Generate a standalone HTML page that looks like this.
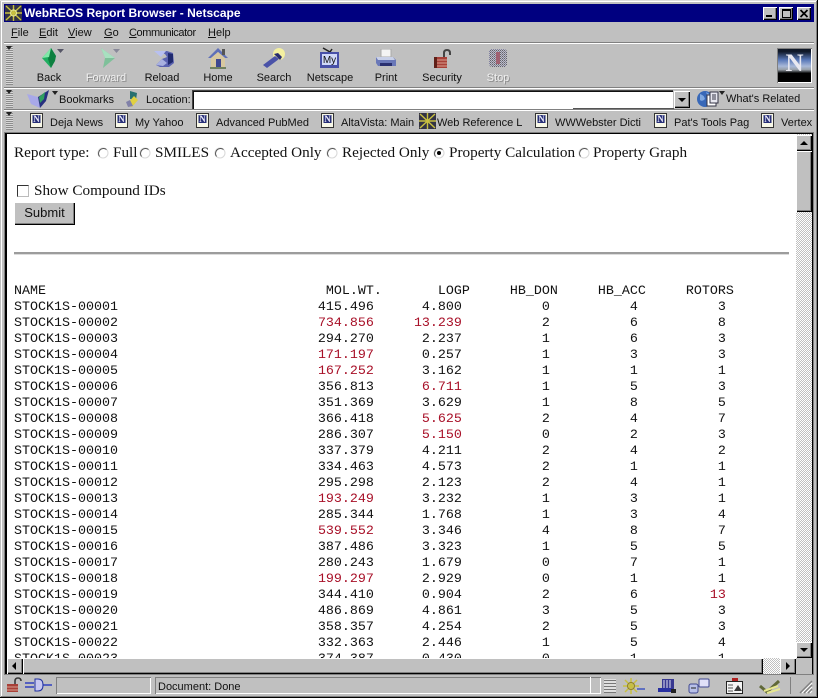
<!DOCTYPE html>
<html><head><meta charset="utf-8"><title>WebREOS Report Browser - Netscape</title>
<style>
html,body{margin:0;padding:0;background:#c0c0c0}
#w{position:relative;width:818px;height:698px;overflow:hidden;background:#c0c0c0;font:11px "Liberation Sans",sans-serif;color:#111}
#w>*,.a{position:absolute}
.t{white-space:nowrap;line-height:14px}
.c{text-align:center;width:56px}
.g{color:#f0f0f0;text-shadow:1px 1px 0 #8a8a8a}
.hl{background:#fff;height:1px}
.dk{background:#808080;height:1px}
.grip{width:7px;background:repeating-linear-gradient(0deg,#8c8c8c 0 1px,#d8d8d8 1px 2px);left:6px}
.btn{background:#c0c0c0;box-shadow:inset 1px 1px 0 #fff,inset -1px -1px 0 #000,inset -2px -2px 0 #808080}
.r{font:15.2px "Liberation Serif",serif;color:#111;white-space:nowrap;line-height:18px}
pre{margin:0;font:13.33px/16px "Liberation Mono",monospace;color:#111}
pre b{font-weight:normal;color:#a81028}
.tr{width:0;height:0;border-left:3px solid transparent;border-right:3px solid transparent;border-top:4px solid #222}
.dither{background-color:#fff;background-image:repeating-conic-gradient(#c0c0c0 0 25%,#fff 0 50%);background-size:2px 2px}
</style></head><body>
<div id="w">
<div style="left:0;top:0;width:818px;height:1px;background:#ddd"></div>
<div style="left:1px;top:1px;width:816px;height:1px;background:#fff"></div>
<div style="left:1px;top:1px;width:1px;height:696px;background:#fff"></div>
<div style="left:0;top:697px;width:818px;height:1px;background:#000"></div>
<div style="left:817px;top:0;width:1px;height:698px;background:#000"></div>
<div style="left:1px;top:696px;width:816px;height:1px;background:#808080"></div>
<div style="left:816px;top:1px;width:1px;height:696px;background:#808080"></div>

<!-- title bar -->
<div style="left:4px;top:4px;width:810px;height:18px;background:#000080"></div>
<svg style="left:5px;top:5px" width="17" height="16" viewBox="0 0 17 16"><rect width="17" height="16" fill="#334"/><path d="M1 1L16 15M16 1L1 15M8.500 0V16M0 8H17" stroke="#c8c040" stroke-width="1.400"/><circle cx="8.500" cy="8" r="3" fill="none" stroke="#e8e890" stroke-width="1.200"/></svg>
<div class="t" style="left:24px;top:6px;font:bold 12px/14px 'Liberation Sans',sans-serif;color:#fff">WebREOS Report Browser - Netscape</div>
<div class="btn" style="left:763px;top:7px;width:14px;height:13px"></div><div style="left:766px;top:15px;width:6px;height:2px;background:#000"></div>
<div class="btn" style="left:779px;top:7px;width:14px;height:13px"></div><div style="left:782px;top:9px;width:7px;height:6px;border:1px solid #000;border-top-width:2px"></div>
<div class="btn" style="left:797px;top:7px;width:14px;height:13px"></div><svg style="left:797px;top:7px" width="14" height="13"><path d="M3.500 3L10.500 10M10.500 3L3.500 10" stroke="#000" stroke-width="1.700"/></svg>

<!-- menu -->
<div class="t" style="left:11px;top:26px"><u>F</u>ile</div>
<div class="t" style="left:39px;top:26px"><u>E</u>dit</div>
<div class="t" style="left:68px;top:26px"><u>V</u>iew</div>
<div class="t" style="left:104px;top:26px"><u>G</u>o</div>
<div class="t" style="left:129px;top:26px;letter-spacing:-.4px"><u>C</u>ommunicator</div>
<div class="t" style="left:208px;top:26px"><u>H</u>elp</div>
<div class="dk" style="left:4px;top:42px;width:810px"></div><div class="hl" style="left:4px;top:43px;width:810px"></div>

<!-- toolbar -->
<div class="grip" style="top:46px;height:39px"></div><div class="tr" style="left:6px;top:46px"></div>
<div class="dk" style="left:4px;top:87px;width:810px"></div><div class="hl" style="left:4px;top:88px;width:810px"></div>

<svg style="left:40px;top:47px" width="24" height="22" viewBox="0 0 24 22"><path d="M2 11L11 1L16 9L11 21Z" fill="#1fae60"/><path d="M11 1L16 9L15 14L11 21L8 12Z" fill="#0d8040"/><path d="M2 11L9 10L11 1Z" fill="#80e8a8"/><path d="M17 2H24L20.500 6Z" fill="#556"/></svg>
<svg style="left:96px;top:47px" width="24" height="22" viewBox="0 0 24 22"><path d="M5 1L19 11L7 21L9 11Z" fill="#7fc09a"/><path d="M5 1L19 11L9 11Z" fill="#a8e0c0"/><path d="M17 2H24L20.500 6Z" fill="#889"/></svg>
<svg style="left:153px;top:48px" width="22" height="20" viewBox="0 0 22 20"><path d="M1 3H14L20 5L21 15L16 19H7L3 17L9 11L14 9L12 6Z" fill="#5a62b0"/><path d="M1 3H13L8 9Z" fill="#b8c0f0"/><path d="M15 5L20 6V14L15 17Z" fill="#202a70"/><path d="M3 17L9 11L14 15L10 18Z" fill="#a8b0e0"/></svg>
<svg style="left:207px;top:47px" width="22" height="22" viewBox="0 0 22 22"><path d="M1 11L11 1L21 11L18 11L11 5L4 11Z" fill="#6070b8"/><rect x="15" y="2" width="3" height="6" fill="#555"/><path d="M4 11L11 5L18 11V20H4Z" fill="#d8c8a0"/><rect x="9" y="12" width="5" height="8" fill="#404890"/><rect x="3" y="20" width="16" height="2" fill="#708060"/></svg>
<svg style="left:262px;top:48px" width="24" height="20" viewBox="0 0 24 20"><circle cx="17" cy="6" r="6" fill="#f4f0a0"/><path d="M1 17L13 8L17 11L5 20Z" fill="#4a52a8"/><path d="M12 6L18 12L20 9L16 5Z" fill="#282c70"/></svg>
<svg style="left:319px;top:47px" width="22" height="22" viewBox="0 0 22 22"><path d="M4 1L11 5L13 2" fill="none" stroke="#222" stroke-width="1.500"/><rect x="1" y="5" width="19" height="16" fill="#4850a8"/><rect x="3" y="7" width="15" height="11" fill="#d0d8f8"/><text x="10.500" y="16" text-anchor="middle" font-family="Liberation Sans" font-size="10" fill="#111">My</text></svg>
<svg style="left:375px;top:49px" width="22" height="19" viewBox="0 0 22 19"><rect x="6" y="0" width="10" height="8" fill="#f4f4f4" stroke="#aaa"/><path d="M1 8H18L21 11V17H3L1 14Z" fill="#6a78b8"/><path d="M1 8H18L20 11H3Z" fill="#c8d0e8"/><rect x="5" y="14" width="12" height="3" fill="#2a3070"/></svg>
<svg style="left:433px;top:49px" width="20" height="20" viewBox="0 0 20 20"><path d="M11 9V4Q11 1 14 1Q17 1 17 4V6" fill="none" stroke="#444" stroke-width="2"/><rect x="1" y="8" width="13" height="11" fill="#a84038"/><path d="M1 11H14M1 14H14M1 17H14" stroke="#d8a090"/><rect x="1" y="8" width="3" height="11" fill="#602018"/></svg>
<svg style="left:488px;top:48px" width="20" height="20" viewBox="0 0 20 20"><defs><pattern id="d" width="2" height="2" patternUnits="userSpaceOnUse"><rect width="1" height="1" fill="#606070"/><rect x="1" y="1" width="1" height="1" fill="#8080a0"/></pattern></defs><path d="M3 1H17L19 3V17L17 19H3L1 17V3Z" fill="url(#d)"/><rect x="8" y="4" width="4" height="12" fill="#a06070"/></svg>

<div class="t c" style="left:21px;top:71px">Back</div>
<div class="t c g" style="left:78px;top:71px">Forward</div>
<div class="t c" style="left:134px;top:71px">Reload</div>
<div class="t c" style="left:190px;top:71px">Home</div>
<div class="t c" style="left:246px;top:71px">Search</div>
<div class="t c" style="left:302px;top:71px">Netscape</div>
<div class="t c" style="left:358px;top:71px">Print</div>
<div class="t c" style="left:414px;top:71px">Security</div>
<div class="t c g" style="left:470px;top:71px">Stop</div>

<!-- N logo -->
<div style="left:777px;top:48px;width:35px;height:35px;background:linear-gradient(#101828 0,#101828 10%,#5878b8 34%,#a8b8d8 52%,#98a0a8 62%,#000 72%);box-shadow:inset 1px 1px 0 #808080,inset -1px -1px 0 #fff"></div>
<div class="t" style="left:777px;top:50px;width:35px;text-align:center;font:bold 25px/28px 'Liberation Serif',serif;color:#e8e8f0">N</div>

<!-- location bar -->
<div class="grip" style="top:91px;height:17px"></div><div class="tr" style="left:6px;top:90px"></div>
<svg style="left:26px;top:89px" width="26" height="20" viewBox="0 0 26 20"><path d="M1 5L12 8L14 19L5 15Z" fill="#a8a8e8"/><path d="M12 8L23 1L20 12L14 19Z" fill="#283080"/><path d="M13 8L19 3L18 10L14 14Z" fill="#30a060"/></svg>
<div class="tr" style="left:52px;top:91px"></div>
<div class="t" style="left:59px;top:93px">Bookmarks</div>
<svg style="left:125px;top:90px" width="16" height="18" viewBox="0 0 16 18"><path d="M5 1L12 3L11 10L5 9Z" fill="#287070"/><path d="M2 14L9 6L13 10L7 17Z" fill="#e0d040"/><path d="M1 12L5 10L8 16L3 17Z" fill="#8080a8"/></svg>
<div class="t" style="left:146px;top:93px">Location:</div>
<div style="left:192px;top:90px;width:481px;height:19px;background:#fff;box-shadow:inset 1px 1px 0 #444,inset 2px 2px 0 #111"></div>
<div style="left:573px;top:108px;width:101px;height:1px;background:#555"></div>
<div class="btn" style="left:674px;top:91px;width:16px;height:17px"></div><div class="tr" style="left:678px;top:98px;border-left-width:4px;border-right-width:4px;border-top-color:#000"></div>
<svg style="left:696px;top:89px" width="28" height="20" viewBox="0 0 28 20"><circle cx="9" cy="10" r="8" fill="#3868b8"/><path d="M4 5Q8 6 9 10Q6 13 4 11ZM10 3L15 6L12 8Z" fill="#80a8e0"/><rect x="11" y="6" width="9" height="11" fill="#fff" stroke="#334"/><rect x="14" y="3" width="8" height="11" fill="#e8e8f0" stroke="#334"/><path d="M16 6H20M16 8H20M16 10H20" stroke="#334"/></svg>
<div class="tr" style="left:719px;top:91px"></div>
<div class="t" style="left:726px;top:92px">What's Related</div>
<div class="dk" style="left:4px;top:109px;width:810px"></div><div class="hl" style="left:4px;top:110px;width:810px"></div>

<!-- personal bar -->
<div class="grip" style="top:113px;height:17px"></div><div class="tr" style="left:6px;top:112px"></div>
<svg style="left:30px;top:113px" width="14" height="16"><rect x=".5" y=".5" width="12" height="14" fill="#f8f8e8" stroke="#333"/><rect x="2.500" y="2" width="8" height="8" fill="#283078"/><text x="6.500" y="9" text-anchor="middle" font-family="Liberation Serif" font-weight="bold" font-size="9" fill="#e8e8f8">N</text></svg>
<svg style="left:115px;top:113px" width="14" height="16"><rect x=".5" y=".5" width="12" height="14" fill="#f8f8e8" stroke="#333"/><rect x="2.500" y="2" width="8" height="8" fill="#283078"/><text x="6.500" y="9" text-anchor="middle" font-family="Liberation Serif" font-weight="bold" font-size="9" fill="#e8e8f8">N</text></svg>
<svg style="left:196px;top:113px" width="14" height="16"><rect x=".5" y=".5" width="12" height="14" fill="#f8f8e8" stroke="#333"/><rect x="2.500" y="2" width="8" height="8" fill="#283078"/><text x="6.500" y="9" text-anchor="middle" font-family="Liberation Serif" font-weight="bold" font-size="9" fill="#e8e8f8">N</text></svg>
<svg style="left:321px;top:113px" width="14" height="16"><rect x=".5" y=".5" width="12" height="14" fill="#f8f8e8" stroke="#333"/><rect x="2.500" y="2" width="8" height="8" fill="#283078"/><text x="6.500" y="9" text-anchor="middle" font-family="Liberation Serif" font-weight="bold" font-size="9" fill="#e8e8f8">N</text></svg>
<svg style="left:419px;top:113px" width="17" height="16" viewBox="0 0 17 16"><rect width="17" height="16" fill="#334"/><path d="M1 1L16 15M16 1L1 15M8.500 0V16M0 8H17" stroke="#c8c040" stroke-width="1.400"/></svg>
<svg style="left:535px;top:113px" width="14" height="16"><rect x=".5" y=".5" width="12" height="14" fill="#f8f8e8" stroke="#333"/><rect x="2.500" y="2" width="8" height="8" fill="#283078"/><text x="6.500" y="9" text-anchor="middle" font-family="Liberation Serif" font-weight="bold" font-size="9" fill="#e8e8f8">N</text></svg>
<svg style="left:654px;top:113px" width="14" height="16"><rect x=".5" y=".5" width="12" height="14" fill="#f8f8e8" stroke="#333"/><rect x="2.500" y="2" width="8" height="8" fill="#283078"/><text x="6.500" y="9" text-anchor="middle" font-family="Liberation Serif" font-weight="bold" font-size="9" fill="#e8e8f8">N</text></svg>
<svg style="left:761px;top:113px" width="14" height="16"><rect x=".5" y=".5" width="12" height="14" fill="#f8f8e8" stroke="#333"/><rect x="2.500" y="2" width="8" height="8" fill="#283078"/><text x="6.500" y="9" text-anchor="middle" font-family="Liberation Serif" font-weight="bold" font-size="9" fill="#e8e8f8">N</text></svg>
<div class="t" style="left:50px;top:116px">Deja News</div>
<div class="t" style="left:135px;top:116px">My Yahoo</div>
<div class="t" style="left:216px;top:116px">Advanced PubMed</div>
<div class="t" style="left:341px;top:116px">AltaVista: Main</div>
<div class="t" style="left:437px;top:116px">Web Reference L</div>
<div class="t" style="left:555px;top:116px">WWWebster Dicti</div>
<div class="t" style="left:674px;top:116px">Pat's Tools Pag</div>
<div class="t" style="left:781px;top:116px">Vertex</div>

<!-- content frame -->
<div style="left:4px;top:132px;width:810px;height:543px;background:#808080"></div>
<div style="left:5px;top:133px;width:808px;height:541px;background:#000"></div>
<div id="page" style="left:7px;top:134px;width:789px;height:524px;background:#fff;overflow:hidden">
  <div style="position:absolute;left:-7px;top:-134px;width:796px;height:658px">
    <div class="a r" style="left:14px;top:144px">Report type:</div>
    <div class="a r" style="left:113px;top:144px">Full</div>
    <div class="a r" style="left:155px;top:144px">SMILES</div>
    <div class="a r" style="left:230px;top:144px">Accepted Only</div>
    <div class="a r" style="left:342px;top:144px">Rejected Only</div>
    <div class="a r" style="left:449px;top:144px">Property Calculation</div>
    <div class="a r" style="left:593px;top:144px">Property Graph</div>
    <svg class="a" style="left:97px;top:147px" width="12" height="12"><circle cx="6" cy="6" r="5" fill="#fff" stroke="#d8d8d8"/><path d="M2.500 9.500A5 5 0 0 1 9.500 2.500" fill="none" stroke="#555"/></svg>
    <svg class="a" style="left:139px;top:147px" width="12" height="12"><circle cx="6" cy="6" r="5" fill="#fff" stroke="#d8d8d8"/><path d="M2.500 9.500A5 5 0 0 1 9.500 2.500" fill="none" stroke="#555"/></svg>
    <svg class="a" style="left:214px;top:147px" width="12" height="12"><circle cx="6" cy="6" r="5" fill="#fff" stroke="#d8d8d8"/><path d="M2.500 9.500A5 5 0 0 1 9.500 2.500" fill="none" stroke="#555"/></svg>
    <svg class="a" style="left:326px;top:147px" width="12" height="12"><circle cx="6" cy="6" r="5" fill="#fff" stroke="#d8d8d8"/><path d="M2.500 9.500A5 5 0 0 1 9.500 2.500" fill="none" stroke="#555"/></svg>
    <svg class="a" style="left:433px;top:147px" width="12" height="12"><circle cx="6" cy="6" r="5" fill="#fff" stroke="#d8d8d8"/><path d="M2.500 9.500A5 5 0 0 1 9.500 2.500" fill="none" stroke="#555"/><circle cx="6" cy="6" r="2" fill="#000"/></svg>
    <svg class="a" style="left:578px;top:147px" width="12" height="12"><circle cx="6" cy="6" r="5" fill="#fff" stroke="#d8d8d8"/><path d="M2.500 9.500A5 5 0 0 1 9.500 2.500" fill="none" stroke="#555"/></svg>
    <div class="a" style="left:17px;top:185px;width:10px;height:10px;border:1px solid #bbb;border-top-color:#333;border-left-color:#333;background:#fff"></div>
    <div class="a r" style="left:34px;top:182px">Show Compound IDs</div>
    <div class="a btn" style="left:14px;top:202px;width:61px;height:23px;font:13px/22px 'Liberation Sans',sans-serif;text-align:center">Submit</div>
    <div class="a" style="left:14px;top:252px;width:775px;height:2px;background:#9c9c9c"></div>
    <div class="a" style="left:14px;top:254px;width:775px;height:1px;background:#dcdcdc"></div>
<pre class="a" style="left:14px;top:284px">NAME                                   MOL.WT.       LOGP     HB_DON     HB_ACC     ROTORS
STOCK1S-00001                         415.496      4.800          0          4          3
STOCK1S-00002                         <b>734.856</b>     <b>13.239</b>          2          6          8
STOCK1S-00003                         294.270      2.237          1          6          3
STOCK1S-00004                         <b>171.197</b>      0.257          1          3          3
STOCK1S-00005                         <b>167.252</b>      3.162          1          1          1
STOCK1S-00006                         356.813      <b>6.711</b>          1          5          3
STOCK1S-00007                         351.369      3.629          1          8          5
STOCK1S-00008                         366.418      <b>5.625</b>          2          4          7
STOCK1S-00009                         286.307      <b>5.150</b>          0          2          3
STOCK1S-00010                         337.379      4.211          2          4          2
STOCK1S-00011                         334.463      4.573          2          1          1
STOCK1S-00012                         295.298      2.123          2          4          1
STOCK1S-00013                         <b>193.249</b>      3.232          1          3          1
STOCK1S-00014                         285.344      1.768          1          3          4
STOCK1S-00015                         <b>539.552</b>      3.346          4          8          7
STOCK1S-00016                         387.486      3.323          1          5          5
STOCK1S-00017                         280.243      1.679          0          7          1
STOCK1S-00018                         <b>199.297</b>      2.929          0          1          1
STOCK1S-00019                         344.410      0.904          2          6         <b>13</b>
STOCK1S-00020                         486.869      4.861          3          5          3
STOCK1S-00021                         358.357      4.254          2          5          3
STOCK1S-00022                         332.363      2.446          1          5          4
STOCK1S-00023                         374.387      0.430          0          1          1</pre>
  </div>
</div>

<!-- vertical scrollbar -->
<div class="dither" style="left:796px;top:134px;width:16px;height:524px"></div>
<div class="btn" style="left:796px;top:135px;width:16px;height:16px"></div><div class="tr" style="left:800px;top:141px;border-left-width:4px;border-right-width:4px;border-top:0;border-bottom:4px solid #000"></div>
<div class="btn" style="left:796px;top:151px;width:16px;height:61px"></div>
<div class="btn" style="left:796px;top:642px;width:16px;height:16px"></div><div class="tr" style="left:800px;top:648px;border-left-width:4px;border-right-width:4px;border-top-color:#000"></div>

<!-- horizontal scrollbar -->
<div class="dither" style="left:7px;top:658px;width:789px;height:16px"></div>
<div class="btn" style="left:7px;top:658px;width:16px;height:16px"></div><div class="a" style="left:12px;top:662px;width:0;height:0;border-top:4px solid transparent;border-bottom:4px solid transparent;border-right:4px solid #000"></div>
<div class="btn" style="left:23px;top:658px;width:740px;height:16px"></div>
<div class="btn" style="left:780px;top:658px;width:16px;height:16px"></div><div class="a" style="left:786px;top:662px;width:0;height:0;border-top:4px solid transparent;border-bottom:4px solid transparent;border-left:4px solid #000"></div>
<div style="left:796px;top:658px;width:16px;height:16px;background:#c0c0c0"></div>

<!-- status bar -->
<div style="left:4px;top:675px;width:810px;height:20px;background:#c0c0c0"></div>
<svg style="left:6px;top:677px" width="16" height="16" viewBox="0 0 16 16"><path d="M9 7V4Q9 1 12 1Q15 1 15 4" fill="none" stroke="#333" stroke-width="1.500"/><rect x="1" y="7" width="11" height="8" fill="#a84038"/><path d="M1 10H12M1 13H12" stroke="#d8a090"/></svg>
<svg style="left:25px;top:678px" width="28" height="14" viewBox="0 0 28 14"><path d="M0 5H9M0 9H9M18 7H27" stroke="#3040c0" stroke-width="1.500"/><path d="M10 1H13Q18 1 18 7Q18 13 13 13H10Z" fill="#c8c8f0" stroke="#2030a0"/></svg>
<div style="left:56px;top:677px;width:95px;height:17px;box-shadow:inset 1px 1px 0 #808080,inset -1px -1px 0 #fff"></div>
<div style="left:155px;top:677px;width:446px;height:17px;box-shadow:inset 1px 1px 0 #808080,inset -1px -1px 0 #fff"></div>
<div class="t" style="left:158px;top:680px">Document: Done</div>
<div style="left:604px;top:679px;width:12px;height:14px;background:repeating-linear-gradient(0deg,#777 0 1px,#e0e0e0 1px 3px)"></div>
<svg style="left:623px;top:678px" width="22" height="16" viewBox="0 0 22 16"><path d="M2 2L14 14M14 2L2 14M8 0V16M0 8H16" stroke="#c8c040" stroke-width="1.500"/><circle cx="8" cy="8" r="3.500" fill="none" stroke="#908020"/><path d="M14 11H22" stroke="#6070c0" stroke-width="2"/></svg>
<svg style="left:657px;top:678px" width="20" height="16" viewBox="0 0 20 16"><rect x="5" y="1" width="12" height="10" fill="#383890"/><path d="M7 2V10M10 2V10M13 2V10" stroke="#e0e0f0"/><rect x="1" y="10" width="14" height="4" fill="#2830a0"/><rect x="14" y="11" width="5" height="4" fill="#222"/></svg>
<svg style="left:688px;top:678px" width="22" height="16" viewBox="0 0 22 16"><rect x="1" y="6" width="9" height="9" rx="2" fill="#b8c0e8" stroke="#404890"/><rect x="11" y="1" width="10" height="8" rx="1" fill="#e0e0f8" stroke="#404890"/><path d="M3 10H8" stroke="#222"/></svg>
<svg style="left:726px;top:678px" width="18" height="16" viewBox="0 0 18 16"><rect x=".5" y="3.500" width="16" height="12" fill="#f4f4f4" stroke="#222"/><path d="M2 7H7M2 10H7M2 13H7" stroke="#555"/><path d="M8 13L12 7L16 13Z" fill="#383838"/><rect x="6" y="0" width="6" height="3" fill="#b02020"/></svg>
<svg style="left:759px;top:678px" width="22" height="16" viewBox="0 0 22 16"><path d="M1 8L8 14L20 3" fill="none" stroke="#606838" stroke-width="3"/><path d="M5 13L19 8M8 15L21 11" stroke="#e8e890" stroke-width="2"/></svg>
<svg style="left:799px;top:680px" width="14" height="14"><path d="M13 1L1 13M13 5L5 13M13 9L9 13" stroke="#808080" stroke-width="1.500"/><path d="M13 3L3 13M13 7L7 13M13 11L11 13" stroke="#fff"/></svg>
<div style="left:590px;top:677px;width:1px;height:17px;background:#fff"></div>
<div style="left:790px;top:677px;width:1px;height:17px;background:#808080"></div>
</div>
</body></html>
